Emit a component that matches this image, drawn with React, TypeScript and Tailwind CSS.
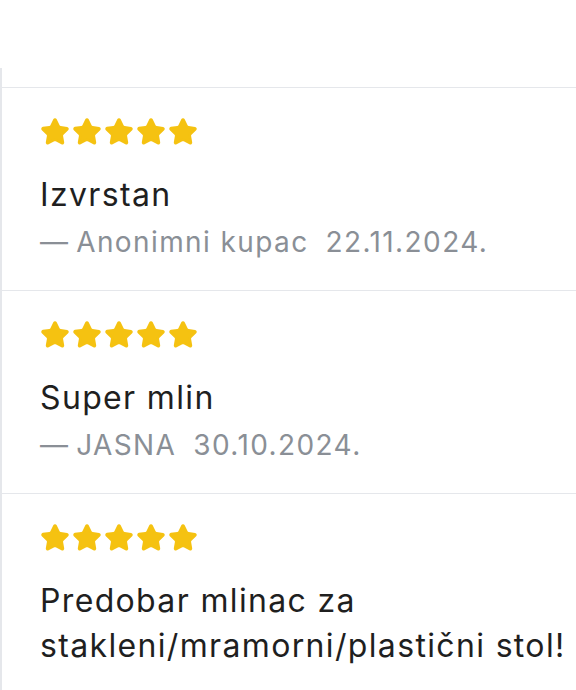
import { Star } from "lucide-react";

const REVIEWS = [
  { title: "Izvrstan", author: "Anonimni kupac", date: "22.11.2024." },
  { title: "Super mlin", author: "JASNA", date: "30.10.2024." },
  { title: "Predobar mlinac za stakleni/mramorni/plastični stol!", author: "", date: "" },
];

function Stars() {
  return (
    <div className="flex gap-[2px]">
      {[0, 1, 2, 3, 4].map((i) => (
        <Star key={i} size={30} strokeWidth={2} className="fill-[#f5c211] text-[#f5c211]" />
      ))}
    </div>
  );
}

export default function App() {
  return (
    <div className="h-[690px] w-[576px] overflow-hidden bg-white font-['Inter',sans-serif]">
      <div className="h-[68px]" />
      <div className="border-l-2 border-gray-200 pt-[19px]">
        {REVIEWS.map((r) => (
          <div key={r.title} className="h-[203px] border-t border-gray-200 pl-[38px] pr-1 pt-[29px]">
            <Stars />
            <p className="mt-[25px] text-[32px] leading-[45px] tracking-[0.042em] text-[#1f1f1f]">{r.title}</p>
            {r.author && (
              <p className="mt-[7px] text-[28px] leading-[36px] tracking-[0.05em] text-[#8a8f96]">
                <span className="tracking-[-0.04em]">—</span> {r.author}
                <span className="ml-[17px]">{r.date}</span>
              </p>
            )}
          </div>
        ))}
      </div>
    </div>
  );
}
